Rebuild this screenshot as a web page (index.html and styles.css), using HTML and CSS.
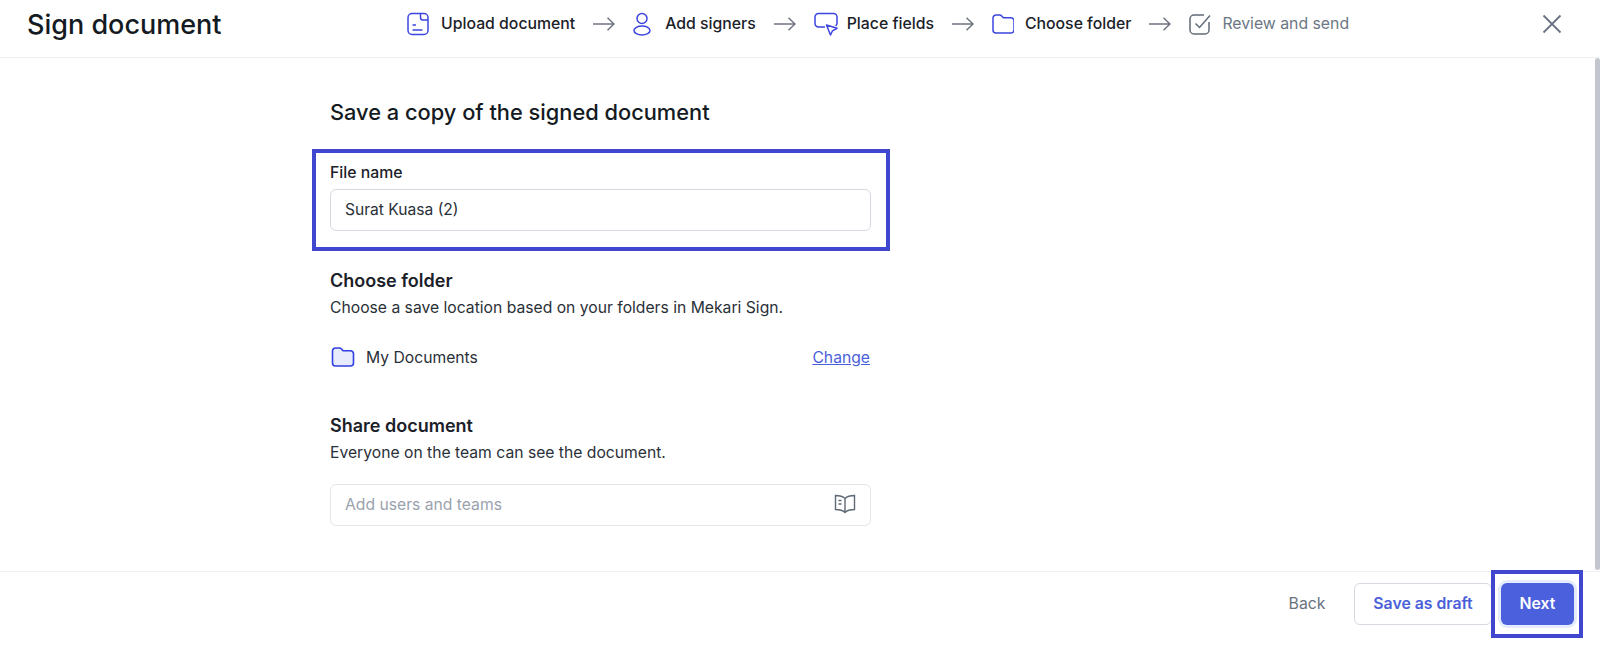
FILE: index.html
```html
<!DOCTYPE html>
<html lang="en">
<head>
    <meta charset="UTF-8">
    <meta name="viewport" content="width=device-width, initial-scale=1.0">
    <title>Sign document</title>
    <link rel="stylesheet" href="styles.css">
</head>
<body>
    <header class="top-bar">
        <h1 class="page-title">Sign document</h1>
        <nav class="steps">
            <div class="step">
                <svg class="step-icon" width="22" height="24" viewBox="0 0 22 24"><rect x="1" y="1.500" width="20" height="21" rx="4"/><path d="M13.500 2v3.500a2.500 2.500 0 0 0 2.500 2.500h5M5.500 13h3.500M5.500 18h10"/></svg>
                <span>Upload document</span>
            </div>
            <svg class="arrow" width="22" height="14" viewBox="0 0 22 14"><path d="M0 7h21M14.500 .8 21 7l-6.500 6.200"/></svg>
            <div class="step step-signers">
                <svg class="step-icon" width="18" height="24" viewBox="0 0 18 24"><circle cx="9" cy="6.500" r="5"/><ellipse cx="9" cy="18.500" rx="8" ry="4.500"/></svg>
                <span>Add signers</span>
            </div>
            <svg class="arrow" width="22" height="14" viewBox="0 0 22 14"><path d="M0 7h21M14.500 .8 21 7l-6.500 6.200"/></svg>
            <div class="step step-fields">
                <svg class="step-icon" width="24" height="24" viewBox="0 0 24 24"><path d="M11 15H4.500A3.500 3.500 0 0 1 1 11.500V5a3.500 3.500 0 0 1 3.500-3.500h15A3.500 3.500 0 0 1 23 5v6.500A3.500 3.500 0 0 1 21.500 14"/><path d="M12.500 13 23 16.300 18.500 18.800 16.500 23z" stroke-linejoin="round"/></svg>
                <span>Place fields</span>
            </div>
            <svg class="arrow" width="22" height="14" viewBox="0 0 22 14"><path d="M0 7h21M14.500 .8 21 7l-6.500 6.200"/></svg>
            <div class="step step-folder">
                <svg class="step-icon" width="22" height="20" viewBox="0 0 22 20"><path d="M1 4a3 3 0 0 1 3-3h3.500a3 3 0 0 1 2.200 1l1.600 1.800h7.700a3 3 0 0 1 3 3V16a3 3 0 0 1-3 3H4a3 3 0 0 1-3-3z"/></svg>
                <span>Choose folder</span>
            </div>
            <svg class="arrow" width="22" height="14" viewBox="0 0 22 14"><path d="M0 7h21M14.500 .8 21 7l-6.500 6.200"/></svg>
            <div class="step step-pending">
                <svg class="step-icon" width="22" height="22" viewBox="0 0 22 22"><path d="M15 2H5a4 4 0 0 0-4 4v11a4 4 0 0 0 4 4h11a4 4 0 0 0 4-4V9"/><path d="m6.500 10.500 4 4L21 2.500"/></svg>
                <span>Review and send</span>
            </div>
        </nav>
        <button class="close-btn" aria-label="Close">
            <svg width="20" height="20" viewBox="0 0 20 20"><path d="M1.500 1.500l17 17M18.500 1.500l-17 17"/></svg>
        </button>
    </header>

    <main class="content">
        <div class="form-col">
            <h2 class="form-title">Save a copy of the signed document</h2>

            <label class="field-label" for="file-name">File name</label>
            <input id="file-name" class="text-input" type="text" value="Surat Kuasa (2)">

            <h3 class="section-title section-folder">Choose folder</h3>
            <p class="section-text">Choose a save location based on your folders in Mekari Sign.</p>
            <div class="folder-row">
                <svg class="folder-icon" width="24" height="20" viewBox="0 0 24 20"><path d="M1.500 4a3 3 0 0 1 3-3h3.800a3 3 0 0 1 2.200 1l1.600 1.800h7.400a3 3 0 0 1 3 3V16a3 3 0 0 1-3 3h-15a3 3 0 0 1-3-3z"/></svg>
                <span class="folder-name">My Documents</span>
                <a class="change-link" href="#">Change</a>
            </div>

            <h3 class="section-title section-share">Share document</h3>
            <p class="section-text">Everyone on the team can see the document.</p>
            <div class="share-input">
                <input class="share-field" type="text" placeholder="Add users and teams">
                <svg class="book-icon" width="22" height="20" viewBox="0 0 22 20"><path d="M11 4.500C9 2.500 5.500 1.500 1.500 1.500v14c4 0 7.500 1 9.500 3 2-2 5.500-3 9.500-3v-14c-4 0-7.500 1-9.500 3zM11 4.500v14M4.500 6.500h3M4.500 10h3"/></svg>
            </div>
        </div>
    </main>

    <footer class="bottom-bar">
        <button class="btn btn-back">Back</button>
        <button class="btn btn-draft">Save as draft</button>
        <button class="btn btn-next">Next</button>
    </footer>

    <div class="scrollbar-thumb"></div>
    <div class="callout callout-field"></div>
    <div class="callout callout-next"></div>
</body>
</html>
```

FILE: styles.css
```css
* {
    box-sizing: border-box;
}

html, body {
    height: 100%;
}

body {
    margin: 0;
    height: 658px;
    display: flex;
    flex-direction: column;
    overflow: hidden;
    position: relative;
    font-family: Inter, "Liberation Sans", sans-serif;
    color: #1b2129;
    background: #fff;
}

.top-bar {
    height: 58px;
    flex: none;
    display: flex;
    align-items: center;
    padding: 0 38px 10px 27px;
    border-bottom: 1px solid #eff1f3;
}

.page-title {
    margin: 0;
    padding-top: 2px;
    width: 380px;
    flex: none;
    font-size: 27px;
    font-weight: 500;
    color: #141a22;
}

.steps {
    display: flex;
    align-items: center;
    flex: 1;
}

.step {
    display: flex;
    align-items: center;
    gap: 12px;
    font-size: 15.800px;
    font-weight: 500;
    white-space: nowrap;
}

.step-signers {
    gap: 14px;
}

.step-fields {
    gap: 9px;
}

.step-folder {
    gap: 11px;
}

.step-icon {
    fill: none;
    stroke: #3b45e0;
    stroke-width: 1.500;
}

.step-pending {
    gap: 11px;
    color: #6b7684;
    font-weight: 400;
}

.step-pending .step-icon {
    stroke: #626b78;
}

.arrow {
    margin: 0 18px;
    fill: none;
    stroke: #6d7480;
    stroke-width: 1.500;
    flex: none;
}

.close-btn {
    padding: 0;
    border: none;
    background: none;
    display: flex;
}

.close-btn svg {
    fill: none;
    stroke: #6b7480;
    stroke-width: 1.800;
}

.content {
    flex: 1;
    padding-left: 330px;
}

.form-col {
    width: 541px;
}

.form-title {
    margin: 39px 0 0;
    font-size: 21.800px;
    line-height: 30px;
    font-weight: 500;
    color: #141a22;
}

.field-label {
    display: block;
    margin-top: 36px;
    font-size: 15.800px;
    line-height: 20px;
    font-weight: 500;
}

.text-input {
    display: block;
    width: 100%;
    height: 42px;
    margin-top: 6px;
    padding: 0 14px 2px;
    border: 1px solid #d5dae1;
    border-radius: 6px;
    font: 400 15.600px Inter, "Liberation Sans", sans-serif;
    color: #2a3038;
}

.section-title {
    margin: 0;
    font-size: 18px;
    line-height: 24px;
    font-weight: 600;
}

.section-folder {
    margin-top: 38px;
}

.section-share {
    margin-top: 45px;
}

.section-text {
    margin: 4px 0 0;
    font-size: 15.700px;
    line-height: 22px;
    color: #2a3038;
}

.folder-row {
    display: flex;
    align-items: center;
    margin-top: 26px;
    height: 24px;
}

.folder-icon {
    margin-left: 1px;
    fill: #e8ebfb;
    stroke: #2f3fe0;
    stroke-width: 1.600;
}

.folder-name {
    margin-left: 11px;
    font-size: 15.700px;
    color: #2a3038;
}

.change-link {
    margin-left: auto;
    margin-right: 1px;
    font-size: 15.700px;
    color: #4a5fd9;
}

.share-input {
    display: flex;
    align-items: center;
    height: 42px;
    margin-top: 20px;
    padding: 0 14px 2px;
    border: 1px solid #e2e6ea;
    border-radius: 6px;
}

.share-field {
    flex: 1;
    min-width: 0;
    border: none;
    outline: none;
    padding: 0;
    font: 400 15.700px Inter, "Liberation Sans", sans-serif;
}

.share-field::placeholder {
    color: #9aa2ae;
    opacity: 1;
}

.book-icon {
    fill: none;
    stroke: #5f6976;
    stroke-width: 1.400;
}

.bottom-bar {
    height: 87px;
    flex: none;
    display: flex;
    align-items: flex-start;
    justify-content: flex-end;
    padding: 11px 26px 0 0;
    border-top: 1px solid #eff1f3;
}

.btn {
    height: 42px;
    padding: 0 0 2px;
    border-radius: 6px;
    font: 600 15.800px Inter, "Liberation Sans", sans-serif;
    background: none;
    border: 1px solid transparent;
}

.btn-back {
    width: 76px;
    margin-right: 9px;
    font-weight: 400;
    color: #69727e;
}

.btn-draft {
    width: 138px;
    border-color: #d5dae1;
    color: #4a5fd9;
}

.btn-next {
    width: 73px;
    margin-left: 9px;
    background: #4b60dd;
    color: #fff;
    box-shadow: 0 0 0 3px #e3ebfd;
}

.scrollbar-thumb {
    position: absolute;
    right: 0;
    top: 58px;
    width: 5px;
    height: 512px;
    border-radius: 3px;
    background: #c3c7cd;
}

.callout {
    position: absolute;
    border: 4px solid #4146cf;
}

.callout-field {
    left: 312px;
    top: 149px;
    width: 578px;
    height: 102px;
}

.callout-next {
    left: 1491px;
    top: 570px;
    width: 92px;
    height: 68px;
}
```
